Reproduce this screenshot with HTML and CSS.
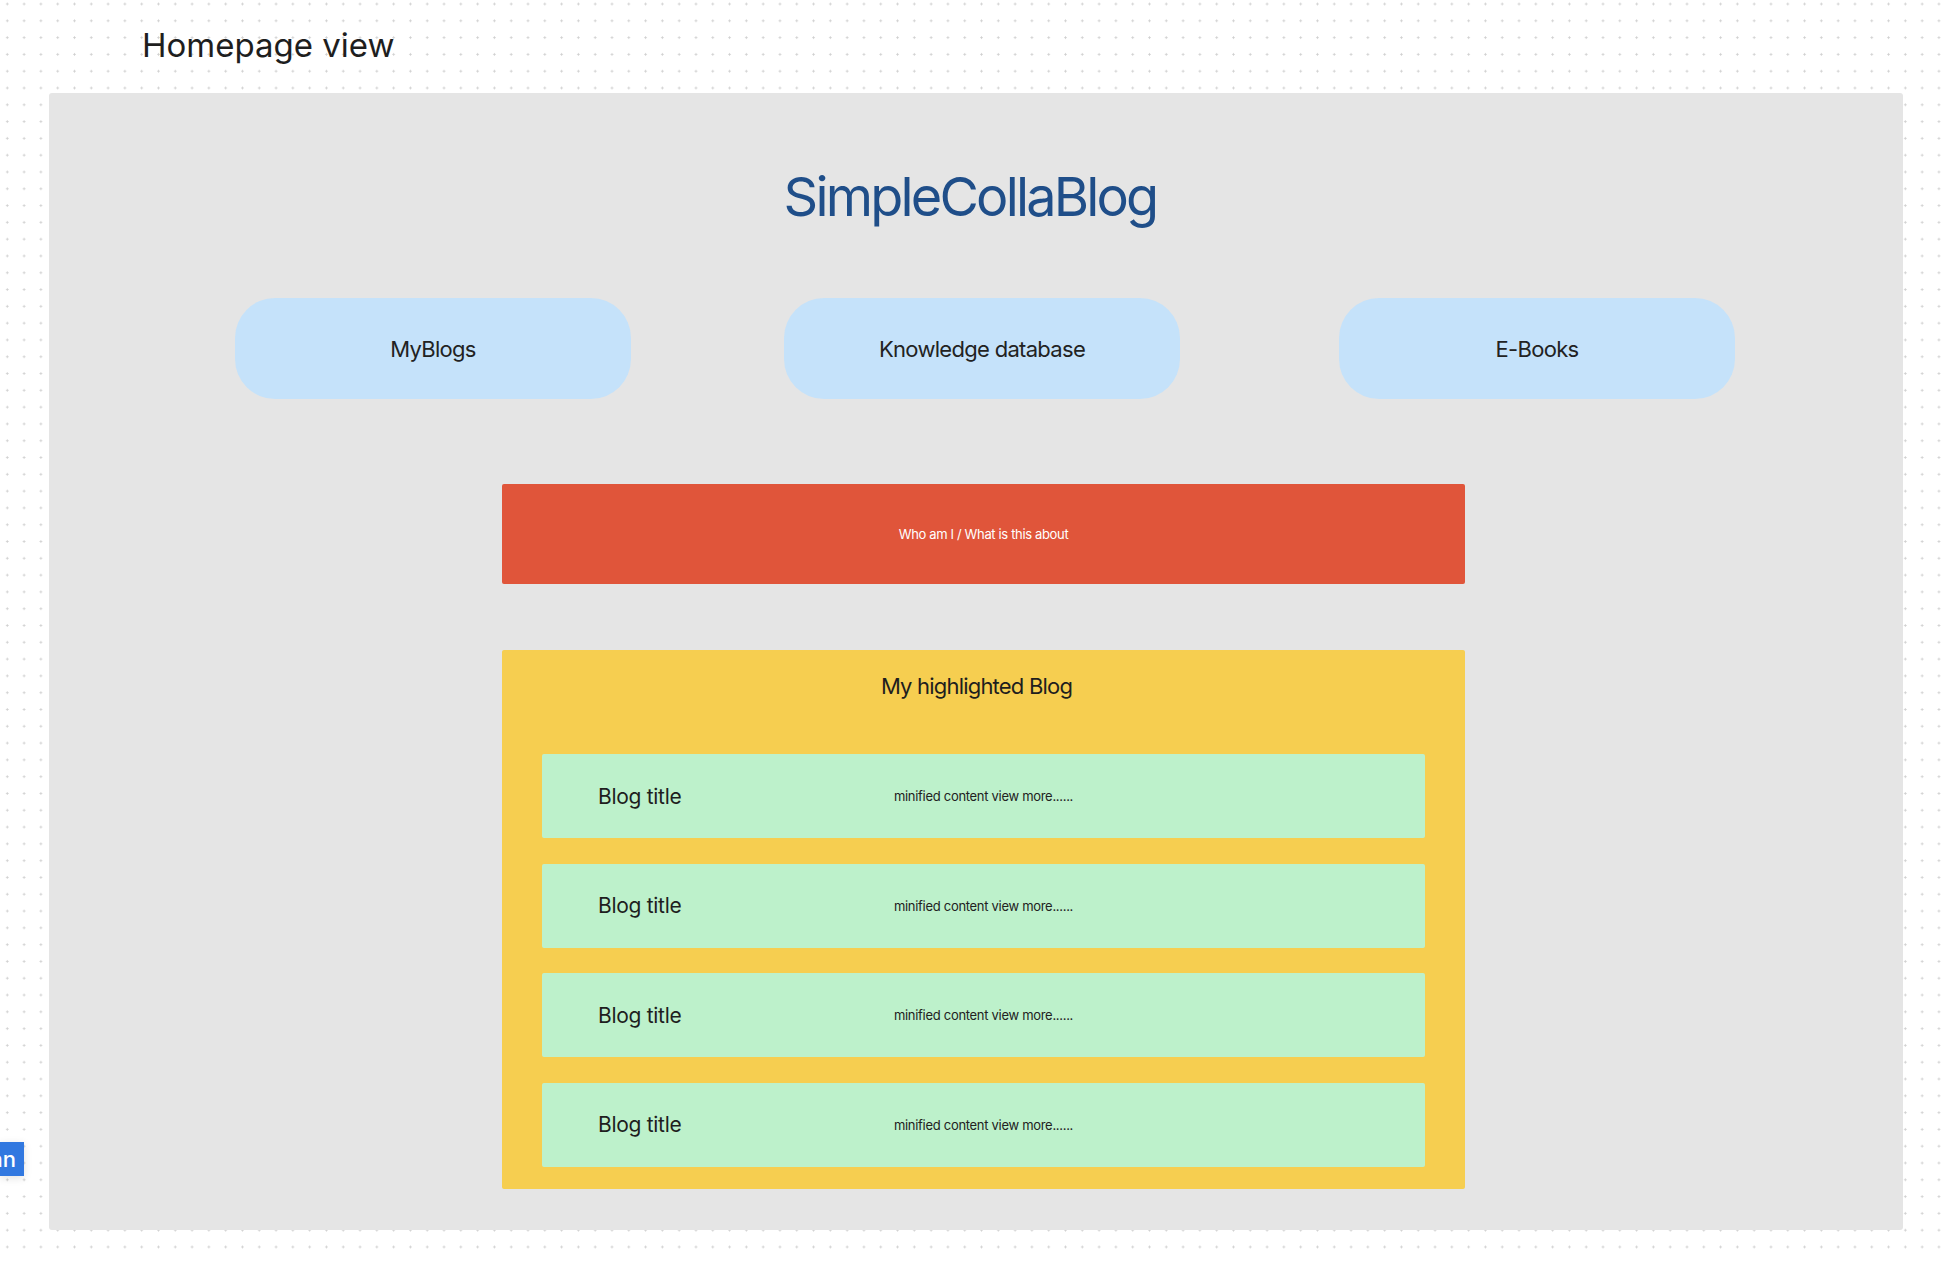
FILE: index.html
```html
<!DOCTYPE html>
<html lang="en">
<head>
<meta charset="utf-8">
<title>Homepage view</title>
<link rel="stylesheet" href="styles.css">
</head>
<body>
  <div class="side-badge"><span>Plan</span></div>
  <h1 class="frame-label">Homepage view</h1>
  <main class="frame">
    <h2 class="site-title">SimpleCollaBlog</h2>
    <nav class="nav-row">
      <a class="nav-pill">MyBlogs</a>
      <a class="nav-pill">Knowledge database</a>
      <a class="nav-pill nav-pill-last">E-Books</a>
    </nav>
    <section class="about">Who am I / What is this about</section>
    <section class="highlight">
      <h3 class="highlight-title">My highlighted Blog</h3>
      <div class="blog-list">
        <article class="blog-row"><span class="blog-title">Blog title</span><span class="blog-excerpt">minified content view more......</span><span></span></article>
        <article class="blog-row"><span class="blog-title">Blog title</span><span class="blog-excerpt">minified content view more......</span><span></span></article>
        <article class="blog-row"><span class="blog-title">Blog title</span><span class="blog-excerpt">minified content view more......</span><span></span></article>
        <article class="blog-row"><span class="blog-title">Blog title</span><span class="blog-excerpt">minified content view more......</span><span></span></article>
      </div>
    </section>
  </main>
</body>
</html>
```

FILE: styles.css
```css
html, body {
  margin: 0;
  padding: 0;
}
body {
  width: 1948px;
  height: 1262px;
  overflow: hidden;
  position: relative;
  font-family: Inter, "Noto Sans", sans-serif;
  color: #1e1e1e;
  background-color: #ffffff;
  background-image: radial-gradient(circle, #cfcfcf 0.9px, transparent 1.3px);
  background-size: 16.8px 16.8px;
  background-position: -1.1px -4.4px;
}
.frame-label {
  margin: 25px 0 28px 142px;
  font-size: 33px;
  line-height: 40px;
  font-weight: 400;
  color: #1e1e1e;
}
.frame {
  margin-left: 49px;
  width: 1854px;
  height: 1137px;
  box-sizing: border-box;
  background: #e5e5e5;
  border-radius: 3px;
  padding-top: 70px;
}
.site-title {
  margin: 0;
  text-align: center;
  font-size: 54px;
  line-height: 67px;
  letter-spacing: -2.8px;
  font-weight: 400;
  color: #1f4e89;
  padding-right: 12px;
}
.nav-row {
  display: flex;
  gap: 153px;
  margin-top: 68px;
  padding-left: 186px;
}
.nav-pill {
  width: 396px;
  height: 101px;
  border-radius: 40px;
  background: #c5e2fa;
  display: flex;
  align-items: center;
  justify-content: center;
  font-size: 22px;
  letter-spacing: -0.7px;
  color: #222;
}
.nav-pill-last {
  margin-left: 6px;
}
.about {
  margin: 85px 0 0 453px;
  width: 963px;
  height: 100px;
  background: #e0553a;
  border-radius: 2px;
  color: #fff;
  font-size: 13px;
  letter-spacing: -0.35px;
  display: flex;
  align-items: center;
  justify-content: center;
}
.highlight {
  margin: 66px 0 0 453px;
  width: 963px;
  height: 539px;
  box-sizing: border-box;
  background: #f6ce50;
  border-radius: 2px;
  padding: 23px 40px 0;
}
.highlight-title {
  margin: 0;
  text-align: center;
  font-size: 22px;
  line-height: 27px;
  letter-spacing: -0.8px;
  font-weight: 400;
  padding-right: 14px;
  color: #1e1e1e;
}
.blog-list {
  margin-top: 54px;
  display: flex;
  flex-direction: column;
  gap: 25.5px;
}
.blog-row {
  height: 84px;
  background: #bdf1cb;
  border-radius: 2px;
  display: grid;
  grid-template-columns: 1fr auto 1fr;
  align-items: center;
}
.blog-title {
  padding-left: 56px;
  font-size: 21px;
  letter-spacing: -0.3px;
}
.blog-excerpt {
  font-size: 13px;
  letter-spacing: -0.3px;
  color: #222;
}
.side-badge {
  position: absolute;
  left: 0;
  top: 1142px;
  width: 24px;
  height: 34px;
  background: #3178e0;
  overflow: hidden;
  box-shadow: 0 2px 8px rgba(0,0,0,0.12);
  display: flex;
  align-items: center;
  justify-content: flex-end;
}
.side-badge span {
  color: #fff;
  font-size: 22px;
  font-weight: 500;
  white-space: nowrap;
  padding-right: 8px;
}
```
